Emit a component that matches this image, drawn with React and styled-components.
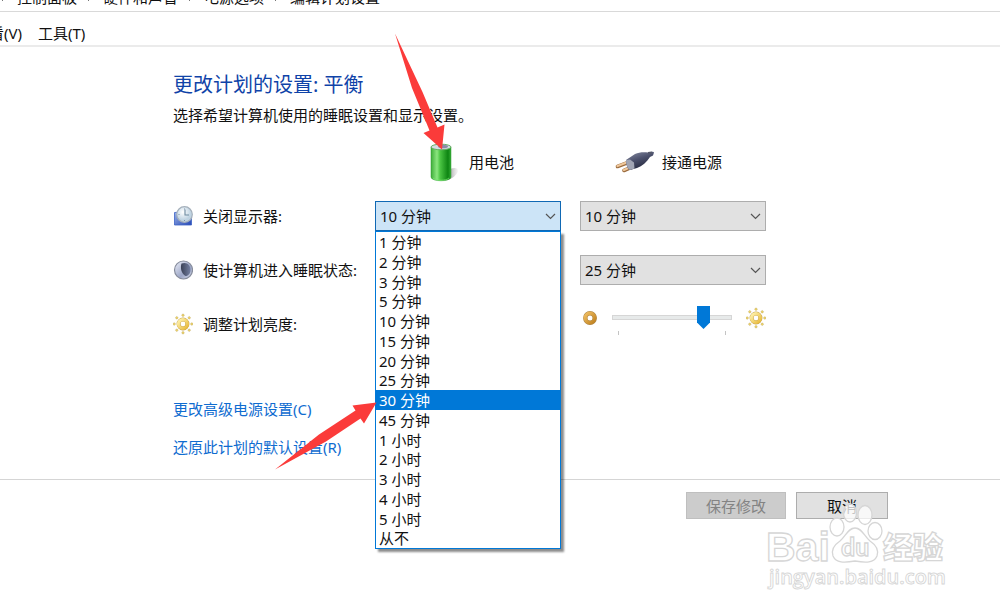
import React, { useState } from 'react'
import styled, { createGlobalStyle } from 'styled-components';

const GlobalStyle = createGlobalStyle`
  * { box-sizing: border-box; }
  body {
    margin: 0;
    background: #fff;
    color: #111;
    font: 15px/20px "Noto Sans", "Noto Sans CJK SC", sans-serif;
    overflow-x: hidden;
  }
  button, select, input {
    font: inherit;
    color: inherit;
    margin: 0;
  }
`;

const times = ['1 分钟', '2 分钟', '3 分钟', '5 分钟', '10 分钟', '15 分钟', '20 分钟', '25 分钟', '30 分钟', '45 分钟',
  '1 小时', '2 小时', '3 小时', '4 小时', '5 小时', '从不'];

const crumbs = ['控制面板', '硬件和声音', '电源选项', '编辑计划设置'];

const Page = styled.div`
  position: relative;
  overflow: hidden;
  padding-bottom: 92px;
`;

const Breadcrumb = styled.nav`
  display: flex;
  align-items: flex-end;
  height: 12px;
  margin-left: -9px;
  padding-bottom: 4px;
  overflow: hidden;
  white-space: nowrap;
  border-bottom: 1px solid #d9d9d9;
`;

const Crumb = styled.a`
  display: flex;
  color: inherit;
  text-decoration: none;
  svg { width: 26px; height: 20px; }
`;

const MenuBar = styled.div`
  display: flex;
  gap: 16px;
  padding: 11px 0 2px;
  margin-left: -26px;
  border-bottom: 2px solid #ebebeb;
`;

const MenuButton = styled.button`
  padding: 0;
  border: 0;
  background: none;
  white-space: nowrap;
`;

const Main = styled.main`
  padding: 24px 20px 20px 173px;
`;

const Title = styled.h1`
  margin: 0;
  font-size: 20px;
  font-weight: 400;
  line-height: 28px;
  color: #0f43a8;
`;

const Intro = styled.p`
  margin: 4px 0 8px;
  line-height: 24px;
`;

const Settings = styled.div`
  display: grid;
  grid-template-columns: 183px minmax(0, 186px) minmax(0, 186px);
  grid-auto-rows: 54px;
  column-gap: 19px;
  align-items: center;
`;

const ColumnHead = styled.div`
  display: flex;
  align-items: center;
  gap: 8px;
  padding-left: ${props => props.$inset};
`;

const RowLabel = styled.label`
  display: flex;
  align-items: center;
  gap: 10px;
  white-space: nowrap;
  svg { flex: none; }
`;

const SelectWrapper = styled.div`
  position: relative;
  > svg {
    position: absolute;
    right: 5px;
    top: 12px;
    pointer-events: none;
  }
`;

const TimeSelect = styled.select`
  display: block;
  appearance: none;
  width: 100%;
  height: 30px;
  padding: 0 4px;
  border: 1px solid ${props => props.$open ? '#0f68b4' : '#adadad'};
  border-radius: 0;
  background: ${props => props.$open ? '#cce4f7' : '#e1e1e1'};
  outline: none;
`;

const List = styled.ul`
  position: absolute;
  z-index: 1;
  top: 100%;
  left: 0;
  right: 0;
  display: grid;
  grid-auto-rows: 1fr;
  height: 318px;
  margin: 0;
  padding: 0;
  list-style: none;
  background: #fff;
  border: 1px solid #0078d7;
  box-shadow: 3px 3px 2px rgba(0, 0, 0, 0.45);
`;

const ListItem = styled.li`
  padding-left: 3px;
  line-height: 20px;
  cursor: default;
  min-height: 0;
  color: ${props => props.$active ? '#fff' : 'inherit'};
  background: ${props => props.$active ? '#0078d7' : 'none'};
`;

const Brightness = styled.div`
  display: flex;
  align-items: flex-start;
  gap: 14px;
  padding-left: 2px;
`;

const SliderColumn = styled.div`
  flex: 1;
  min-width: 0;
`;

const Slider = styled.input`
  display: block;
  appearance: none;
  width: 100%;
  height: 24px;
  background: none;
  outline: none;
  &::-webkit-slider-runnable-track {
    height: 5px;
    background: #e7eaea;
    border: 1px solid #d6d6d6;
  }
  &::-webkit-slider-thumb {
    appearance: none;
    width: 13px;
    height: 23px;
    margin-top: -10px;
    background: #0078d7;
    clip-path: polygon(0 0, 100% 0, 100% 72%, 50% 100%, 0 72%);
  }
`;

const Ticks = styled.div`
  height: 4px;
  margin: 1px 6px 8px;
  border: solid #c4c4c4;
  border-width: 0 1px;
`;

const Links = styled.div`
  display: flex;
  flex-direction: column;
  align-items: flex-start;
  gap: 14px;
  margin-top: 46px;
`;

const PlanLink = styled.a`
  line-height: 24px;
  color: #0f6cd0;
  text-decoration: none;
`;

const Footer = styled.footer`
  display: flex;
  justify-content: flex-end;
  gap: 10px;
  padding: 12px 112px 0 0;
  border-top: 1px solid #d5d5d5;
`;

const FooterButton = styled.button`
  min-width: 92px;
  height: 27px;
  padding: 0 19px;
  line-height: 24px;
  border: 1px solid #adadad;
  background: #e1e1e1;
  &:disabled {
    color: #838383;
    border-color: #bfbfbf;
    background: #ccc;
  }
`;

const Arrows = styled.svg`
  position: absolute;
  z-index: 2;
  top: 0;
  left: 0;
  pointer-events: none;
`;

const Watermark = styled.svg`
  position: absolute;
  z-index: 2;
  right: 50px;
  top: 500px;
  pointer-events: none;
`;

const Chevron = () => (
  <svg width="11" height="7" viewBox="0 0 11 7" fill="none" stroke="#555" strokeWidth="1.2">
    <path d="M1 1l4.5 4.5L10 1" />
  </svg>
)

const BatteryIcon = () => (
  <svg width="40" height="42" viewBox="0 0 40 42">
    <defs>
      <linearGradient id="cell">
        <stop offset="0" stopColor="#3fae3a" />
        <stop offset=".3" stopColor="#8be67f" />
        <stop offset=".45" stopColor="#4cc644" />
        <stop offset=".85" stopColor="#0d8412" />
        <stop offset="1" stopColor="#35ad35" />
      </linearGradient>
      <linearGradient id="cellShadow">
        <stop offset="0" stopColor="#666" stopOpacity=".8" />
        <stop offset="1" stopColor="#aaa" stopOpacity=".1" />
      </linearGradient>
    </defs>
    <path d="M26 39c5-1 10-5 11-9 0-3-3-4-8-2z" fill="url(#cellShadow)" />
    <path d="M10 6v30c0 5 20 5 20 0V6z" fill="url(#cell)" stroke="#2d9a30" strokeWidth=".5" />
    <ellipse cx="20" cy="6" rx="10" ry="2.800" fill="#d5dce2" stroke="#68ad68" />
    <ellipse cx="22" cy="5.500" rx="5" ry="1.800" fill="#8d8ba8" />
    <path d="M12 37c3 3 13 3 16 0" fill="none" stroke="#7bea72" opacity=".7" />
  </svg>
)

const PlugIcon = () => (
  <svg width="40" height="24" viewBox="0 0 40 24">
    <defs>
      <linearGradient id="plug" x1="0" y1="0" x2=".5" y2="1">
        <stop offset="0" stopColor="#8b90a6" />
        <stop offset=".5" stopColor="#4b506c" />
        <stop offset="1" stopColor="#23273c" />
      </linearGradient>
    </defs>
    <path d="M3.500 16.500L14 12.500M10 20.500L19 16.500" stroke="#9a6a3c" strokeWidth="3.600" strokeLinecap="round" />
    <path d="M3.500 16L14 12M10 20L19 16" stroke="#efc79b" strokeWidth="2.200" strokeLinecap="round" />
    <path d="M12 10l9-6c4-2 9-2 13-1.500 3-1 6-1 6 0l-1 3-3 1.500c-3 5-8 9-13 11l-7 2c-3-1-4-7-4-10z" fill="url(#plug)" />
    <path d="M12 10l4-.5 4 3 .5 6-4.500 1.500c-3-1-4-7-4-10z" fill="#a0a4b3" />
    <path d="M34 3l4-.5" fill="none" stroke="#55586a" strokeWidth="2" />
  </svg>
)

const DisplayIcon = () => (
  <svg width="20" height="20" viewBox="0 0 20 20">
    <defs>
      <linearGradient id="screen" x1="0" y1="0" x2="1" y2="1">
        <stop offset="0" stopColor="#9db5e8" />
        <stop offset="1" stopColor="#2547b5" />
      </linearGradient>
      <radialGradient id="clock" cx=".4" cy=".35">
        <stop offset="0" stopColor="#fff" />
        <stop offset="1" stopColor="#bfd3e2" />
      </radialGradient>
    </defs>
    <path d="M1.500 6.500l17-1v13.500H1.500z" fill="url(#screen)" stroke="#3c62c5" strokeWidth=".8" />
    <circle cx="11.500" cy="8.500" r="7.800" fill="url(#clock)" stroke="#a5b0bb" strokeWidth="1.200" />
    <path d="M12 3.500v5.500h4" fill="none" stroke="#6f8ba0" strokeWidth="1.100" />
    <path d="M11.500 2.500v1M5.500 8.500h1M11.500 14v1" stroke="#7c93a6" />
  </svg>
)

const SleepIcon = () => (
  <svg width="20" height="20" viewBox="0 0 20 20">
    <defs>
      <linearGradient id="moon" x1="0" y1="0" x2="1" y2="1">
        <stop offset="0" stopColor="#eef1fb" />
        <stop offset=".6" stopColor="#9ca6c6" />
        <stop offset="1" stopColor="#d7dcec" />
      </linearGradient>
      <linearGradient id="dark">
        <stop offset="0" stopColor="#3a4156" />
        <stop offset="1" stopColor="#7480a2" />
      </linearGradient>
    </defs>
    <circle cx="10.500" cy="10" r="9" fill="url(#moon)" stroke="#868c9c" strokeWidth="1.200" />
    <path d="M8.500 3.500c5-2 9 1 9 6.500 0 4-3 6-5 6C8.500 14 7 8 8.500 3.500z" fill="url(#dark)" />
  </svg>
)

const SunIcon = () => (
  <svg width="20" height="24" viewBox="0 0 20 24">
    <defs>
      <linearGradient id="sun" x1="0" y1="0" x2="1" y2="1">
        <stop offset="0" stopColor="#fff3ae" />
        <stop offset="1" stopColor="#e8b93a" />
      </linearGradient>
    </defs>
    {[0, 45, 90, 135, 180, 225, 270, 315].map(angle => (
      <circle key={angle} cx="10" cy="3.200" r="1.200" fill="#f0d566" stroke="#b9a566" strokeWidth=".4" transform={`rotate(${angle} 10 12)`} />
    ))}
    <circle cx="10" cy="12" r="4.400" fill="#fff" stroke="#c2a050" strokeWidth="4" />
    <circle cx="10" cy="12" r="4.400" fill="none" stroke="url(#sun)" strokeWidth="3.400" />
  </svg>
)

const DimIcon = () => (
  <svg width="16" height="24" viewBox="0 0 16 24">
    <defs>
      <linearGradient id="dim" x1="0" y1="0" x2="1" y2="1">
        <stop offset="0" stopColor="#efbd60" />
        <stop offset="1" stopColor="#c08220" />
      </linearGradient>
    </defs>
    <circle cx="8" cy="12" r="4.700" fill="#fff" stroke="#ad8648" strokeWidth="4.400" />
    <circle cx="8" cy="12" r="4.700" fill="none" stroke="url(#dim)" strokeWidth="3.600" />
  </svg>
)

const TimePicker = ({ id, label, initial, defaultOpen }) => {
  const [value, setValue] = useState(initial)
  const [open, setOpen] = useState(defaultOpen)
  const [active, setActive] = useState('30 分钟')
  return (
    <SelectWrapper>
      <TimeSelect id={id} aria-label={label} $open={open} value={value} onChange={e => setValue(e.target.value)}>
        {times.map(time => <option key={time}>{time}</option>)}
      </TimeSelect>
      <Chevron />
      {open && (
        <List role="listbox" aria-label={label}>
          {times.map(time => (
            <ListItem
              key={time}
              role="option"
              aria-selected={time === active}
              $active={time === active}
              onMouseEnter={() => setActive(time)}
              onClick={() => { setValue(time); setOpen(false) }}
            >
              {time}
            </ListItem>
          ))}
        </List>
      )}
    </SelectWrapper>
  )
}

export default function App() {
  const [brightness, setBrightness] = useState(80)
  return (
    <Page>
      <GlobalStyle />
      <Breadcrumb>
        {crumbs.map(crumb => (
          <Crumb href="#" key={crumb}>
            <svg viewBox="0 0 26 20" fill="none" stroke="#777"><path d="M11 6l4 4-4 4" /></svg>
            {crumb}
          </Crumb>
        ))}
      </Breadcrumb>
      <MenuBar>
        <MenuButton>查看(V)</MenuButton>
        <MenuButton>工具(T)</MenuButton>
      </MenuBar>

      <Main>
        <Title>更改计划的设置: 平衡</Title>
        <Intro>选择希望计算机使用的睡眠设置和显示设置。</Intro>
        <Settings>
          <span />
          <ColumnHead $inset="46px"><BatteryIcon />用电池</ColumnHead>
          <ColumnHead $inset="34px"><PlugIcon />接通电源</ColumnHead>

          <RowLabel htmlFor="display-battery"><DisplayIcon />关闭显示器:</RowLabel>
          <TimePicker id="display-battery" label="关闭显示器" initial="10 分钟" defaultOpen />
          <TimePicker id="display-plugged" label="关闭显示器" initial="10 分钟" />

          <RowLabel htmlFor="sleep-plugged"><SleepIcon />使计算机进入睡眠状态:</RowLabel>
          <span />
          <TimePicker id="sleep-plugged" label="使计算机进入睡眠状态" initial="25 分钟" />

          <RowLabel htmlFor="brightness"><SunIcon />调整计划亮度:</RowLabel>
          <span />
          <Brightness>
            <DimIcon />
            <SliderColumn>
              <Slider id="brightness" type="range" value={brightness} onChange={e => setBrightness(e.target.value)} />
              <Ticks />
            </SliderColumn>
            <SunIcon />
          </Brightness>
        </Settings>
        <Links>
          <PlanLink href="#">更改高级电源设置(C)</PlanLink>
          <PlanLink href="#">还原此计划的默认设置(R)</PlanLink>
        </Links>
      </Main>

      <Footer>
        <FooterButton disabled>保存修改</FooterButton>
        <FooterButton>取消</FooterButton>
      </Footer>

      <Arrows width="460" height="480" viewBox="0 0 460 480" fill="#fb3b3a">
        <path d="M395 33.500L422.500 92 437.500 127.500 444.500 124.500 442 149.500 423.500 133 429.500 130.500 412 88z" />
        <path d="M275 469.500L319 434.500 355.500 410.500 352.500 405.500 376.500 402.500 364 423.500 360.500 418.500 326 441.500z" />
      </Arrows>

      <Watermark width="184" height="92" viewBox="0 0 184 92" fill="#fff" fillOpacity=".75" stroke="#d6d6d6" strokeWidth="1.300">
        <text x="0" y="61" fontSize="41" fontFamily="Liberation Sans, sans-serif" fontWeight="700">Bai</text>
        <ellipse cx="71" cy="27" rx="7" ry="9" />
        <ellipse cx="84" cy="13" rx="6.500" ry="9" />
        <ellipse cx="99" cy="15" rx="7" ry="9.500" />
        <ellipse cx="109" cy="31" rx="7" ry="8.500" />
        <path d="M89 28c-7 0-9 8-15 13-6 4-9 9-7 15 3 7 11 7 22 5 11 2 19 2 22-5 2-6-1-11-7-15-6-5-8-13-15-13z" />
        <text x="75" y="56" fontSize="25" fontFamily="Lato, sans-serif" fontWeight="700">du</text>
        <text x="117" y="58" fontSize="30" fontFamily="Noto Sans CJK SC, sans-serif" fontWeight="900">经验</text>
        <text x="3" y="84" fontSize="20" fontFamily="Open Sans, sans-serif" fontWeight="600" strokeWidth=".9">jingyan.baidu.com</text>
      </Watermark>
    </Page>
  )
}
